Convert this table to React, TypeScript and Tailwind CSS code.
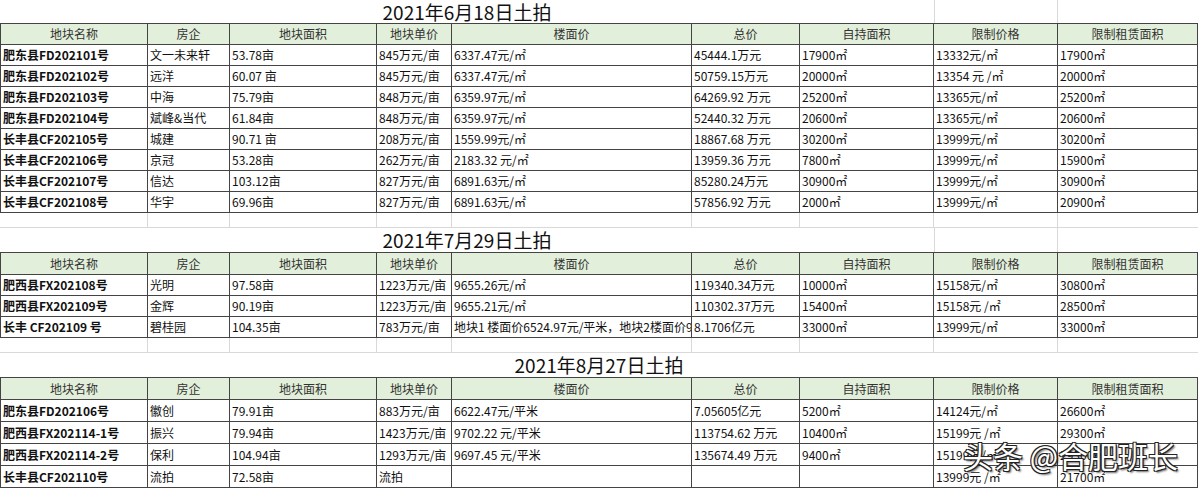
import React from "react";

type Row = string[];

const COLS =
  "grid grid-cols-[148px_82px_147px_75px_240px_108px_134px_124px_140px]";

const HEADERS = [
  "地块名称",
  "房企",
  "地块面积",
  "地块单价",
  "楼面价",
  "总价",
  "自持面积",
  "限制价格",
  "限制租赁面积",
];

const S1: Row[] = [
  ["肥东县FD202101号", "文一未来轩", "53.78亩", "845万元/亩", "6337.47元/㎡", "45444.1万元", "17900㎡", "13332元/㎡", "17900㎡"],
  ["肥东县FD202102号", "远洋", "60.07 亩", "845万元/亩", "6337.47元/㎡", "50759.15万元", "20000㎡", "13354 元 /㎡", "20000㎡"],
  ["肥东县FD202103号", "中海", "75.79亩", "848万元/亩", "6359.97元/㎡", "64269.92 万元", "25200㎡", "13365元/㎡", "25200㎡"],
  ["肥东县FD202104号", "斌峰&当代", "61.84亩", "848万元/亩", "6359.97元/㎡", "52440.32 万元", "20600㎡", "13365元/㎡", "20600㎡"],
  ["长丰县CF202105号", "城建", "90.71 亩", "208万元/亩", "1559.99元/㎡", "18867.68 万元", "30200㎡", "13999元/㎡", "30200㎡"],
  ["长丰县CF202106号", "京冠", "53.28亩", "262万元/亩", "2183.32 元/㎡", "13959.36 万元", "7800㎡", "13999元/㎡", "15900㎡"],
  ["长丰县CF202107号", "信达", "103.12亩", "827万元/亩", "6891.63元/㎡", "85280.24万元", "30900㎡", "13999元/㎡", "30900㎡"],
  ["长丰县CF202108号", "华宇", "69.96亩", "827万元/亩", "6891.63元/㎡", "57856.92 万元", "2000㎡", "13999元/㎡", "20900㎡"],
];

const S2: Row[] = [
  ["肥西县FX202108号", "光明", "97.58亩", "1223万元/亩", "9655.26元/㎡", "119340.34万元", "10000㎡", "15158元/㎡", "30800㎡"],
  ["肥西县FX202109号", "金辉", "90.19亩", "1223万元/亩", "9655.21元/㎡", "110302.37万元", "15400㎡", "15158元 /㎡", "28500㎡"],
  ["长丰 CF202109 号", "碧桂园", "104.35亩", "783万元/亩", "地块1 楼面价6524.97元/平米，地块2楼面价9655.21元/平米", "8.1706亿元", "33000㎡", "13999元/㎡", "33000㎡"],
];

const S3: Row[] = [
  ["肥东县FD202106号", "徽创", "79.91亩", "883万元/亩", "6622.47元/平米", "7.05605亿元", "5200㎡", "14124元/㎡", "26600㎡"],
  ["肥西县FX202114-1号", "振兴", "79.94亩", "1423万元/亩", "9702.22 元/平米", "113754.62 万元", "10400㎡", "15199元 /㎡", "29300㎡"],
  ["肥西县FX202114-2号", "保利", "104.94亩", "1293万元/亩", "9697.45 元/平米", "135674.49 万元", "9400㎡", "15199元/㎡", "29300㎡"],
  ["长丰县CF202110号", "流拍", "72.58亩", "流拍", "", "", "", "13999元 /㎡", "21700㎡"],
];

function Header({ h }: { h: string }) {
  return (
    <div className={`${COLS} ${h}`}>
      {HEADERS.map((t, i) => (
        <div
          key={i}
          className={`flex items-center justify-center bg-[#e2efda] text-[#333] text-[12px] border-t border-b border-r border-[#444] ${
            i === 0 ? "border-l" : ""
          }`}
        >
          {t}
        </div>
      ))}
    </div>
  );
}

function DataRow({ r, h }: { r: Row; h: string }) {
  return (
    <div className={`${COLS} ${h}`}>
      {r.map((t, i) => (
        <div
          key={i}
          className={`flex items-center px-[2px] whitespace-nowrap overflow-hidden text-[12px] text-[#111] border-b border-r border-[#444] ${
            i === 0 ? "border-l font-bold" : ""
          }`}
        >
          {t}
        </div>
      ))}
    </div>
  );
}

function EmptyRow() {
  return (
    <div className={`${COLS} h-[15px]`}>
      {HEADERS.map((_, i) => (
        <div
          key={i}
          className={`border-b border-[#d9d9d9] ${i < 8 ? "border-r" : ""}`}
        />
      ))}
    </div>
  );
}

function TitleRow({ text, h, full }: { text: string; h: string; full?: boolean }) {
  if (full) {
    return (
      <div className={`${COLS} ${h}`}>
        <div className="col-span-9 flex items-center justify-center text-[19px] text-[#111] leading-[22px]">
          {text}
        </div>
      </div>
    );
  }
  return (
    <div className={`${COLS} ${h}`}>
      <div className="col-span-7 flex items-center justify-center text-[19px] text-[#111] leading-[22px]">
        {text}
      </div>
      <div className="border-l border-r border-[#d9d9d9]" />
      <div />
    </div>
  );
}

export default function App() {
  return (
    <div className="relative w-[1200px] h-[490px] overflow-hidden bg-white [font-family:'Noto_Sans_CJK_SC','Noto_Sans',sans-serif]">
      <TitleRow text="2021年6月18日土拍" h="h-[23px]" />
      <Header h="h-[22px]" />
      {S1.map((r, i) => (
        <DataRow key={i} r={r} h="h-[21px]" />
      ))}
      <EmptyRow />
      <TitleRow text="2021年7月29日土拍" h="h-[24px]" />
      <Header h="h-[23px]" />
      {S2.map((r, i) => (
        <DataRow key={i} r={r} h="h-[21px]" />
      ))}
      <EmptyRow />
      <TitleRow text="2021年8月27日土拍" h="h-[24px]" full />
      <Header h="h-[23px]" />
      {S3.map((r, i) => (
        <DataRow key={i} r={r} h="h-[22px]" />
      ))}
      <div className="absolute left-[963px] top-[440px] text-[30px] leading-none text-white whitespace-nowrap [text-shadow:1px_1px_0_#222,-1px_-1px_0_#222,1px_-1px_0_#222,-1px_1px_0_#222,2px_2px_2px_rgba(0,0,0,0.6)]">
        头条 @合肥班长
      </div>
    </div>
  );
}
